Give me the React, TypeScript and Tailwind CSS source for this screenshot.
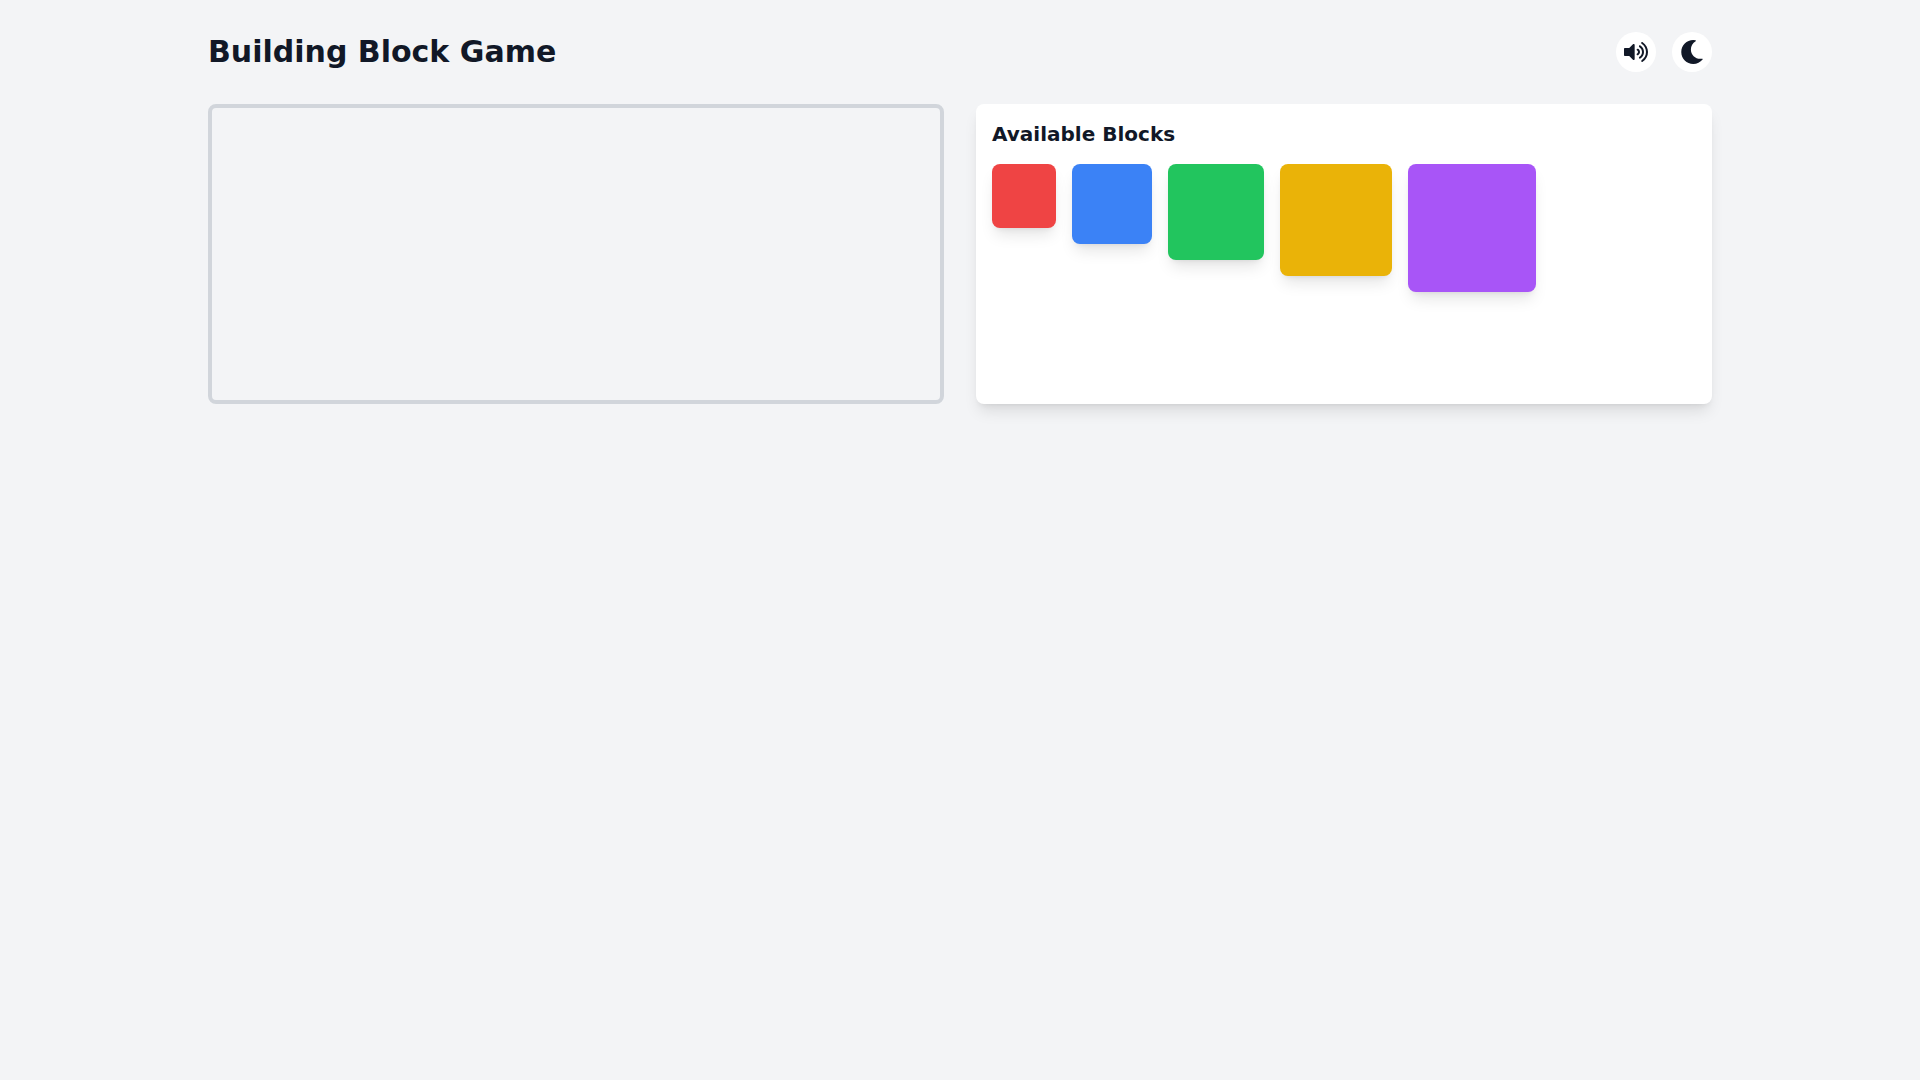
import { FaMoon, FaVolumeUp } from "react-icons/fa";

const BLOCKS = [
  { id: "red", className: "w-16 h-16 bg-[#ef4444]" },
  { id: "blue", className: "w-20 h-20 bg-[#3b82f6]" },
  { id: "green", className: "w-24 h-24 bg-[#22c55e]" },
  { id: "yellow", className: "w-28 h-28 bg-[#eab308]" },
  { id: "purple", className: "w-32 h-32 bg-[#a855f7]" },
];

export default function App() {
  return (
    <div className="min-h-screen bg-[#f3f4f6] font-['DejaVu_Sans',sans-serif] text-[#111827]">
      <div className="mx-auto max-w-[1536px] p-4">
        {/* Header */}
        <header className="flex items-center justify-between py-4 mb-4">
          <h1 className="text-3xl font-bold">Building Block Game</h1>
          <div className="flex gap-4">
            <button className="flex h-10 w-10 items-center justify-center rounded-full bg-white">
              <FaVolumeUp className="h-6 w-6" />
            </button>
            <button className="flex h-10 w-10 items-center justify-center rounded-full bg-white">
              <FaMoon className="h-6 w-6" />
            </button>
          </div>
        </header>

        <div className="grid grid-cols-2 gap-8">
          {/* Build area */}
          <div className="h-[300px] rounded-lg border-4 border-[#d1d5db]" />

          {/* Block palette */}
          <div className="h-[300px] rounded-lg bg-white p-4 shadow-lg">
            <h2 className="mb-4 text-xl font-semibold">Available Blocks</h2>
            <div className="flex items-start gap-4">
              {BLOCKS.map((b) => (
                <div key={b.id} className={`${b.className} rounded-lg shadow-lg`} />
              ))}
            </div>
          </div>
        </div>
      </div>
    </div>
  );
}
